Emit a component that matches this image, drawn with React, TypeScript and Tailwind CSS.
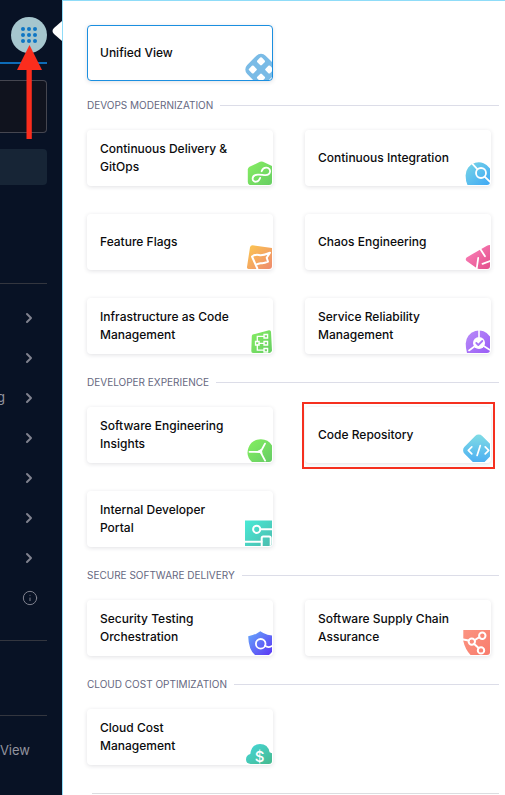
import type { ReactNode } from "react";
import { ChevronRight, Info } from "lucide-react";

type Module = { name: string; icon: ReactNode; selected?: boolean; highlighted?: boolean };

function Fade({ id, from, to }: { id: string; from: string; to: string }) {
  return (
    <defs>
      <linearGradient id={id} x1="0" y1="0" x2="1" y2="1">
        <stop offset="0" stopColor={from} />
        <stop offset="1" stopColor={to} />
      </linearGradient>
    </defs>
  );
}

function Glyph({ children }: { children: ReactNode }) {
  return (
    <svg
      viewBox="0 0 28 28"
      className="size-7 shrink-0 self-end"
      fill="none"
      stroke="#fff"
      strokeLinecap="round"
      strokeLinejoin="round"
      aria-hidden="true"
    >
      {children}
    </svg>
  );
}

const unified = (
  <Glyph>
    <g transform="rotate(45 17 17.5)" stroke="none">
      <rect x="4" y="4.5" width="26" height="26" rx="6.5" fill="#7abbe6" />
      <rect x="8" y="8.5" width="6.400" height="6.400" rx="1.200" fill="#fff" />
      <rect x="19.600" y="8.500" width="6.400" height="6.400" rx="1.200" fill="#fff" />
      <rect x="8" y="20.100" width="6.400" height="6.400" rx="1.200" fill="#fff" />
      <rect x="19.600" y="20.100" width="6.400" height="6.400" rx="1.200" fill="#fff" />
    </g>
  </Glyph>
);

const delivery = (
  <Glyph>
    <Fade id="cd" from="#86ee62" to="#67ce63" />
    <path
      d="M5.5 9.8 16 4.8q1.500-.6 3 0l9 4.300V28H5.500q-1.700-1-1.700-3V12.500q0-1.800 1.700-2.700Z"
      fill="url(#cd)"
      stroke="none"
    />
    <path
      d="M17.600 14.200c1-2.600 3-3.800 5-3.600 2.300.2 3.800 2.300 3.400 4.300-.4 2.200-2.500 3.300-4.800 3.200-2.600-.1-4.400-.6-7.400-.4-3 .2-5.200 1.900-5.200 4 0 2 1.800 3.200 3.600 3 2.400-.2 3.400-2 4-3.900"
      strokeWidth="1.8"
    />
  </Glyph>
);

const integration = (
  <Glyph>
    <Fade id="ci" from="#7ad6e6" to="#3fa8f5" />
    <path d="M5.500 28Q3.600 24 3.600 18.500a13.200 13.200 0 0 1 24.400-7V28Z" fill="url(#ci)" stroke="none" />
    <circle cx="19" cy="16" r="5" strokeWidth="1.8" />
    <path d="m9.500 5.800 5.800 6.400M22.600 19.600l5.400 5.200" strokeWidth="1.800" />
  </Glyph>
);

const flags = (
  <Glyph>
    <Fade id="ff" from="#fcc850" to="#ee8a6e" />
    <path d="M8.500 4.300 28 7v21H4.500q-1.800-.4-1.500-2L6 6.300q.5-2 2.500-2Z" fill="url(#ff)" stroke="none" />
    <path
      d="M13.300 27.500 8 15.500q3.500-2.500 7-1.500t11-2.300l-3.300 5 1.300 4q-4 1.800-6.500 1.500t-5.800 1.600"
      strokeWidth="2"
    />
  </Glyph>
);

const chaos = (
  <Glyph>
    <Fade id="ce" from="#fd86bd" to="#e34e8b" />
    <path d="M28 4v24H17q-1.500-.3-2.500-1L4.600 20q-1.700-1.800 0-3.600L24.500 5Q26 4 28 4Z" fill="url(#ce)" stroke="none" />
    <path d="m18 7.500 5 7.800M16.200 17l-1.400 10M20.500 22.800 28 20" strokeWidth="1.800" />
  </Glyph>
);

const infra = (
  <Glyph>
    <Fade id="iac" from="#84ec62" to="#67cf63" />
    <path
      d="m9.500 9.300 15.500-4q1.800-.2 2 1.500l1 19q0 2-2 2.200H9q-1.700-.2-1.700-2l.5-15q.2-1.400 1.700-1.700Z"
      fill="url(#iac)"
      stroke="none"
    />
    <g strokeWidth="1.300" strokeLinejoin="miter">
      <path d="M11.500 16.500h3.600V20h-3.600ZM20 9.500h3.600V13H20ZM20 16.500h3.600V20H20ZM20 23.500h3.600V27H20Z" />
      <path d="M15 18.300h5M13.300 16.500v-5.200H20M13.300 20v5.200H20" />
    </g>
  </Glyph>
);

const reliability = (
  <Glyph>
    <Fade id="srm" from="#b98df8" to="#9a5cf6" />
    <path d="M5 28Q3.700 23 3.700 18.500a13.200 13.200 0 0 1 24.300-7V28Z" fill="url(#srm)" stroke="none" />
    <path d="M17 4v8M17 18 7 25.500M17 18l11 7" strokeWidth="1.600" />
    <circle cx="17" cy="18" r="6" fill="#fff" stroke="none" />
    <path d="m14.300 18 2 2 4-4" stroke="#a875f7" strokeWidth="1.800" />
  </Glyph>
);

const insights = (
  <Glyph>
    <Fade id="sei" from="#84f05f" to="#67cc66" />
    <path d="M8 28a13 13 0 0 1 8.500-22.700A13 13 0 0 1 28 11.500V28Z" fill="url(#sei)" stroke="none" />
    <path d="M16.500 18 21 9.600M16.500 18l-11-.2M16.500 18l4.600 8.600" strokeWidth="1.800" />
    <path d="m14 17.200 3.200-1.700.8 3.700Z" fill="#fff" strokeWidth="1" />
  </Glyph>
);

const code = (
  <Glyph>
    <Fade id="cr" from="#84dfe4" to="#41a6f5" />
    <rect x="4.200" y="3.700" width="25" height="25" rx="5" transform="rotate(45 16.700 16.200)" fill="url(#cr)" stroke="none" />
    <path d="m9.800 12.800-3.500 3.500 3.500 3.500M18.300 11.500l-3.200 10M23.200 12.800l3.500 3.500-3.500 3.500" strokeWidth="1.700" />
  </Glyph>
);

const portal = (
  <Glyph>
    <Fade id="idp" from="#49ead6" to="#4cbcae" />
    <path d="M1 2.500h27V28H1Z" fill="url(#idp)" stroke="none" />
    <circle cx="12.700" cy="11.300" r="3.600" strokeWidth="2" />
    <path d="M16.500 11.300H28M1 23.700h16.500" strokeWidth="2" />
    <rect x="17.700" y="18.500" width="9" height="11" rx="1.500" strokeWidth="2" />
  </Glyph>
);

const security = (
  <Glyph>
    <Fade id="sto" from="#66a9fb" to="#5a36f4" />
    <path d="m16.300 4.300 3 1.600q4 2 8.700 2.500V25l-3 3H11q-6.500-5.500-6.800-18.800Q10.500 8 13.500 6Z" fill="url(#sto)" stroke="none" />
    <circle cx="16.700" cy="16.800" r="4.800" strokeWidth="1.800" />
    <path d="M21 18.800q3 2.400 7 .2" strokeWidth="1.800" />
  </Glyph>
);

const supply = (
  <Glyph>
    <Fade id="ssca" from="#fb9481" to="#f87c6d" />
    <path d="M1.300 3H28v25H8.500Q3 22 1.300 14Z" fill="url(#ssca)" stroke="none" />
    <g strokeWidth="2">
      <circle cx="9.800" cy="14.600" r="3.200" />
      <circle cx="20.300" cy="8.700" r="3.200" />
      <circle cx="19" cy="23.400" r="3.200" />
      <path d="m1.300 12.600 5.200 1M12.800 13l4.700-2.800M12.200 16.900l4.400 4" />
    </g>
  </Glyph>
);

const cost = (
  <Glyph>
    <Fade id="ccm" from="#45d8dc" to="#46b98d" />
    <path
      d="M6.500 28Q2 27.500 2 23.500q0-4.300 4.300-5.500Q7.500 8 16 8q8 0 9.600 8.200l2.400 1V28Z"
      fill="url(#ccm)"
      stroke="none"
    />
    <text x="15.700" y="25.500" textAnchor="middle" fill="#fff" stroke="none" className="font-['Inter',sans-serif] text-[15px] font-medium">
      $
    </text>
  </Glyph>
);

const groups: { title: string; modules: Module[] }[] = [
  {
    title: "DEVOPS MODERNIZATION",
    modules: [
      { name: "Continuous Delivery & GitOps", icon: delivery },
      { name: "Continuous Integration", icon: integration },
      { name: "Feature Flags", icon: flags },
      { name: "Chaos Engineering", icon: chaos },
      { name: "Infrastructure as Code Management", icon: infra },
      { name: "Service Reliability Management", icon: reliability },
    ],
  },
  {
    title: "DEVELOPER EXPERIENCE",
    modules: [
      { name: "Software Engineering Insights", icon: insights },
      { name: "Code Repository", icon: code, highlighted: true },
      { name: "Internal Developer Portal", icon: portal },
    ],
  },
  {
    title: "SECURE SOFTWARE DELIVERY",
    modules: [
      { name: "Security Testing Orchestration", icon: security },
      { name: "Software Supply Chain Assurance", icon: supply },
    ],
  },
  { title: "CLOUD COST OPTIMIZATION", modules: [{ name: "Cloud Cost Management", icon: cost }] },
];

function Card({ name, icon, selected, highlighted }: Module) {
  return (
    <div className="relative">
      <button
        type="button"
        className={`flex h-14 w-full items-center justify-between overflow-hidden rounded border bg-white pl-3 text-left text-[12px] leading-[18px] font-medium text-[#0b0b0d] shadow-[0_1px_4px_rgba(40,41,61,0.14)] ${
          selected ? "border-[#1b8fe0]" : "border-transparent"
        }`}
      >
        <span className="max-w-34">{name}</span>
        {icon}
      </button>
      {highlighted && (
        <span className="pointer-events-none absolute -top-[5px] -right-1 -bottom-[6px] -left-[3px] border-2 border-[#f5301f]" />
      )}
    </div>
  );
}

const navRows = ["", "", "g", "", "", "", ""];

function Sidebar() {
  return (
    <aside className="relative w-[62px] shrink-0 bg-[#081225] pr-[15px] text-[#93949f]">
      <div className="flex h-16 items-end justify-end border-b-2 border-[#0d6cb8] pb-[9px]">
        <button
          type="button"
          aria-label="Select module"
          className="flex size-9 items-center justify-center rounded-full bg-[#a6c6ce]"
        >
          <svg viewBox="0 0 16 16" className="size-4" fill="#0f76c4" aria-hidden="true">
            {[2, 8, 14].map((y) => [2, 8, 14].map((x) => <circle key={`${x}-${y}`} cx={x} cy={y} r="2" />))}
          </svg>
        </button>
      </div>
      <button
        type="button"
        aria-label="Project"
        className="mt-4 flex h-[53px] w-full items-center justify-end rounded-r border border-l-0 border-[#454650] bg-[#10131e] pr-3"
      >
        <ChevronRight className="size-2 text-[#6b6d78]" />
      </button>
      <div className="mt-4 h-9 rounded-r bg-[#172536]" />
      <hr className="mt-[98px] border-[#33363f]" />
      <nav className="mt-[14px]">
        {navRows.map((label, i) => (
          <button
            key={i}
            type="button"
            aria-label={label || "Expand"}
            className="flex h-10 w-full items-center justify-end gap-4 pr-[10px] text-[13px]"
          >
            <span>{label}</span>
            <ChevronRight className="size-4 shrink-0 text-[#80828f]" strokeWidth={3} />
          </button>
        ))}
        <div className="flex h-10 items-center justify-end pr-[9px]">
          <Info className="size-4 text-[#80828f]" strokeWidth={1.5} />
        </div>
      </nav>
      <hr className="mt-[22px] border-[#33363f]" />
      <hr className="mt-[74px] border-[#33363f]" />
      <a href="#view" className="mt-6 flex justify-end pr-[17px] text-[13px] leading-5">
        View
      </a>
      <svg viewBox="0 0 12 20" className="absolute top-[21px] right-0 h-5 w-3" fill="#fff" aria-hidden="true">
        <path d="M12 0 4 7Q1 10 4 13L12 20Z" />
      </svg>
      <svg viewBox="0 0 26 94" className="absolute top-[45px] left-[17px] h-[94px] w-[26px]" fill="#fb2d1d" aria-hidden="true">
        <path d="M12.500 0 25 25H14.800V94H9.500V25H0Z" />
      </svg>
    </aside>
  );
}

export default function App() {
  return (
    <div className="flex h-screen overflow-hidden bg-white font-['Inter',sans-serif]">
      <Sidebar />
      <main className="min-w-0 flex-1 border-t border-l border-[#8fdcf8] pt-6 pr-[6px] pl-6">
        <div className="grid grid-cols-2 gap-x-8 pr-2">
          <Card name="Unified View" icon={unified} selected />
        </div>
        <div className="-mt-1">
          {groups.map((group) => (
            <section key={group.title} className="pt-[19px]">
              <h2 className="flex h-[18px] items-center gap-[7px] text-[10px] whitespace-nowrap text-[#666881] after:h-px after:flex-1 after:bg-[#dcdde8]">
                {group.title}
              </h2>
              <div className="mt-4 grid grid-cols-2 gap-x-8 gap-y-7 pr-2">
                {group.modules.map((m) => (
                  <Card key={m.name} {...m} />
                ))}
              </div>
            </section>
          ))}
        </div>
        <hr className="mt-7 ml-[5px] border-[#dcdde0]" />
      </main>
    </div>
  );
}
